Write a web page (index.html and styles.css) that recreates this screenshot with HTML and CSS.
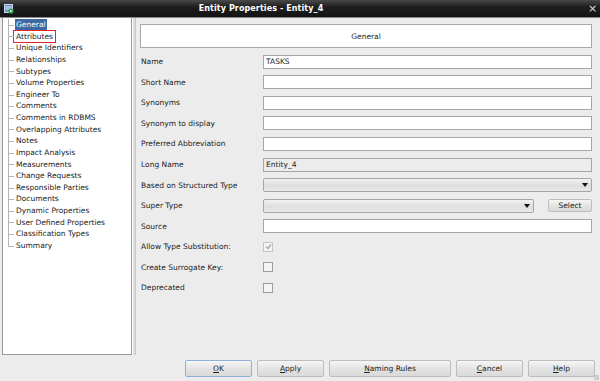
FILE: index.html
```html
<!DOCTYPE html>
<html>
<head>
<meta charset="utf-8">
<link rel="stylesheet" href="styles.css">
</head>
<body>
<div class="window">
  <div class="titlebar">
    <svg class="appicon" width="10" height="10" viewBox="0 0 10 10">
      <rect x="0.5" y="0.5" width="8" height="8" fill="#6d8fc0" stroke="#c8d8ee" stroke-width="1"/>
      <rect x="1.5" y="2.5" width="6" height="1" fill="#e8f0fa"/>
      <rect x="1.5" y="4.5" width="6" height="1" fill="#e8f0fa"/>
      <circle cx="7" cy="7" r="2.6" fill="#2aa34a"/>
      <path d="M6.2 5.8 L8.2 7 L6.2 8.2 Z" fill="#fff"/>
    </svg>
    <span class="title">Entity Properties - Entity_4</span>
    <span class="close">×</span>
  </div>
  <div class="main">
    <div class="tree">
      <ul>
        <li><span class="sel">General</span></li>
        <li><span class="marked">Attributes</span></li>
        <li><span>Unique Identifiers</span></li>
        <li><span>Relationships</span></li>
        <li><span>Subtypes</span></li>
        <li><span>Volume Properties</span></li>
        <li><span>Engineer To</span></li>
        <li><span>Comments</span></li>
        <li><span>Comments in RDBMS</span></li>
        <li><span>Overlapping Attributes</span></li>
        <li><span>Notes</span></li>
        <li><span>Impact Analysis</span></li>
        <li><span>Measurements</span></li>
        <li><span>Change Requests</span></li>
        <li><span>Responsible Parties</span></li>
        <li><span>Documents</span></li>
        <li><span>Dynamic Properties</span></li>
        <li><span>User Defined Properties</span></li>
        <li><span>Classification Types</span></li>
        <li class="last"><span>Summary</span></li>
      </ul>
    </div>
    <div class="splitter"></div>
    <div class="content">
      <div class="header">General</div>
      <div class="form">
        <label>Name</label><div class="field"><div class="input">TASKS</div></div>
        <label>Short Name</label><div class="field"><div class="input"></div></div>
        <label>Synonyms</label><div class="field"><div class="input"></div></div>
        <label>Synonym to display</label><div class="field"><div class="input"></div></div>
        <label>Preferred Abbreviation</label><div class="field"><div class="input"></div></div>
        <label>Long Name</label><div class="field"><div class="input disabled">Entity_4</div></div>
        <label>Based on Structured Type</label><div class="field"><div class="combo"><span class="arrow"></span></div></div>
        <label>Super Type</label><div class="field split"><div class="combo"><span class="arrow"></span></div><div class="btn small">Select</div></div>
        <label>Source</label><div class="field"><div class="input"></div></div>
        <label>Allow Type Substitution:</label><div class="field"><div class="check checked">
          <svg width="7" height="7" viewBox="0 0 7 7"><path d="M1 3.5 L3 5.5 L6 1.5" fill="none" stroke="#a8a8a0" stroke-width="1.3"/></svg>
        </div></div>
        <label>Create Surrogate Key:</label><div class="field"><div class="check"></div></div>
        <label>Deprecated</label><div class="field"><div class="check"></div></div>
      </div>
    </div>
  </div>
  <div class="footer">
    <div class="btn ok"><u>O</u>K</div>
    <div class="btn"><u>A</u>pply</div>
    <div class="btn wide"><u>N</u>aming Rules</div>
    <div class="btn"><u>C</u>ancel</div>
    <div class="btn"><u>H</u>elp</div>
    <div class="grip"></div>
  </div>
</div>
</body>
</html>
```

FILE: styles.css
```css
* { box-sizing: border-box; }
html, body { margin: 0; padding: 0; }
body {
  width: 600px;
  height: 381px;
  overflow: hidden;
  font-family: "DejaVu Sans", "Liberation Sans", sans-serif;
  font-size: 7.5px;
  color: #222;
  background: #ececec;
}
.window {
  width: 600px;
  height: 381px;
  display: flex;
  flex-direction: column;
}
.titlebar {
  height: 17px;
  flex: none;
  background: linear-gradient(#4a4a4a, #1e1e1e 40%, #141414);
  color: #fff;
  display: flex;
  align-items: center;
  position: relative;
  padding: 0 4px;
}
.appicon { flex: none; }
.title {
  flex: 1;
  text-align: center;
  font-weight: bold;
  font-size: 8px;
  letter-spacing: 0.1px;
  padding-right: 80px;
}
.close {
  font-size: 11px;
  color: #ddd;
  width: 8px;
  text-align: center;
}
.main {
  flex: 1;
  display: flex;
  min-height: 0;
  border-top: 1px solid #8a8a8a;
}
.tree {
  width: 130px;
  margin-left: 2px;
  background: #fff;
  border: 1px solid #9a9a9a;
  border-top: none;
  flex: none;
  padding-top: 1px;
}
.tree ul {
  list-style: none;
  margin: 0;
  padding: 0 0 0 5px;
}
.tree li {
  height: 11.63px;
  line-height: 11.63px;
  position: relative;
  padding-left: 7px;
  white-space: nowrap;
}
.tree li::before {
  content: "";
  position: absolute;
  left: 0;
  top: 0;
  bottom: 0;
  border-left: 1px solid #b4b4b4;
}
.tree li.last::before { bottom: 50%; }
.tree li::after {
  content: "";
  position: absolute;
  left: 0;
  width: 6px;
  top: 50%;
  border-top: 1px solid #b4b4b4;
}
.tree li span {
  padding: 0 1px;
  display: inline-block;
  line-height: 11px;
}
.tree li .sel {
  background: #3b69a0;
  color: #fff;
}
.tree li .marked {
  outline: 1.5px solid #e0282a;
  outline-offset: 0px;
  padding: 0 2px;
  margin-left: -1px;
}
.splitter {
  width: 4px;
  flex: none;
  border-left: 1px solid #fff;
  border-right: 1px solid #c8c8c8;
  background: #dcdcdc;
}
.content {
  flex: 1;
  padding: 6px 8px 0 4px;
}
.header {
  height: 24px;
  background: #fff;
  border: 1px solid #a8a8a8;
  display: flex;
  align-items: center;
  justify-content: center;
}
.form {
  margin-top: 3.5px;
  display: grid;
  grid-template-columns: 123px 1fr;
  grid-auto-rows: 20.55px;
  align-items: center;
}
.form label {
  padding-left: 1px;
  white-space: nowrap;
}
.field {
  display: flex;
  align-items: center;
}
.input {
  flex: 1;
  height: 14px;
  background: #fff;
  border: 1px solid #a6a6a6;
  padding: 0 2px;
  line-height: 12px;
}
.input.disabled { background: #ececec; }
.combo {
  flex: 1;
  height: 14px;
  border: 1px solid #a6a6a6;
  border-radius: 2px;
  background: linear-gradient(#f2f2f2, #dedede 55%, #e8e8e8);
  position: relative;
}
.arrow {
  position: absolute;
  right: 3px;
  top: 4px;
  width: 0;
  height: 0;
  border-left: 3px solid transparent;
  border-right: 3px solid transparent;
  border-top: 4px solid #111;
}
.split { gap: 14px; }
.btn {
  height: 17px;
  width: 67px;
  border: 1px solid #bdbdbd;
  border-radius: 2px;
  background: linear-gradient(#f6f6f6, #e2e2e2 55%, #dadada);
  display: flex;
  align-items: center;
  justify-content: center;
  color: #222;
}
.btn.small {
  width: 44px;
  height: 13px;
}
.btn.wide { width: 122px; }
.btn.ok { border-color: #8fb0d6; }
.footer {
  height: 26px;
  flex: none;
  display: flex;
  align-items: center;
  justify-content: flex-end;
  gap: 5px;
  padding-right: 5px;
  position: relative;
}
.grip {
  position: absolute;
  right: 1px;
  bottom: 1px;
  width: 5px;
  height: 5px;
  background: radial-gradient(circle, #aaa 0.6px, transparent 0.8px) 0 0 / 2px 2px;
}
.check {
  width: 10px;
  height: 10px;
  border: 1px solid #9d9d9d;
  background: #f4f4f4;
  display: flex;
  align-items: center;
  justify-content: center;
}
.check.checked { border-color: #c4c4c4; }
```
